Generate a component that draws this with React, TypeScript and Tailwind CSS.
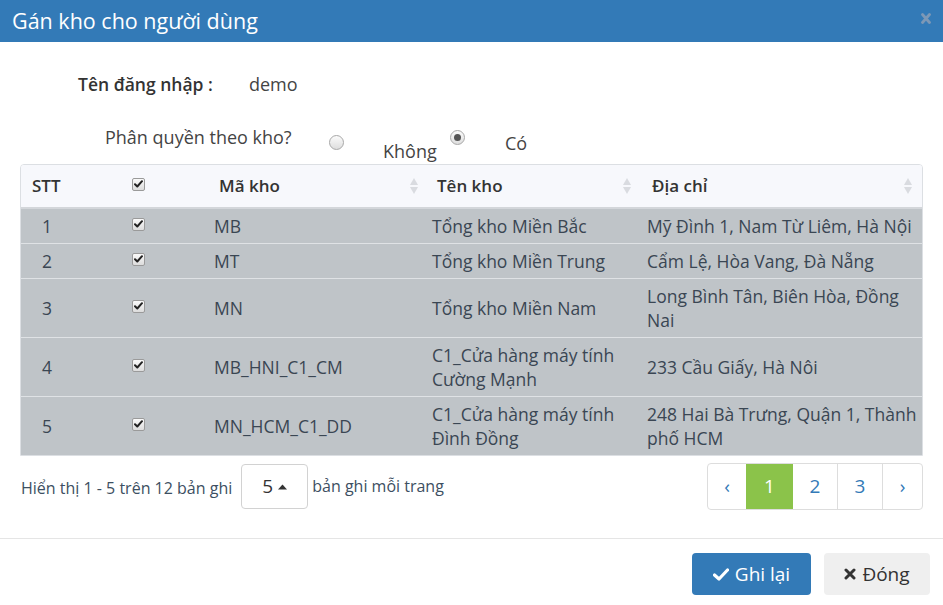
import React from "react";

const font = { fontFamily: '"Open Sans", "Noto Sans", sans-serif' };

function Check() {
  return (
    <span className="inline-flex h-[13px] w-[13px] items-center justify-center rounded-[2px] border border-[#9a9a9a] bg-gradient-to-b from-[#fafafa] to-[#dcdcdc]">
      <svg width="9" height="8" viewBox="0 0 9 8">
        <path d="M1 4.2 L3.3 6.5 L8 1.2" stroke="#222" strokeWidth="2" fill="none" strokeLinecap="round" strokeLinejoin="round" />
      </svg>
    </span>
  );
}

function Radio({ checked }: { checked?: boolean }) {
  return (
    <span className="inline-flex h-[15px] w-[15px] items-center justify-center rounded-full border border-[#a8a8a8] bg-gradient-to-b from-[#fbfbfb] to-[#dedede]">
      {checked && <span className="h-[7px] w-[7px] rounded-full bg-[#555]" />}
    </span>
  );
}

function Sort() {
  return (
    <svg width="10" height="18" viewBox="0 0 10 18" className="shrink-0">
      <path d="M5 1 L9 8 L1 8 Z" fill="#d9dbe0" />
      <path d="M1 10 L9 10 L5 17 Z" fill="#d9dbe0" />
    </svg>
  );
}

const rows: { stt: string; ma: string; ten: string[]; dc: string[] }[] = [
  { stt: "1", ma: "MB", ten: ["Tổng kho Miền Bắc"], dc: ["Mỹ Đình 1, Nam Từ Liêm, Hà Nội"] },
  { stt: "2", ma: "MT", ten: ["Tổng kho Miền Trung"], dc: ["Cẩm Lệ, Hòa Vang, Đà Nẵng"] },
  { stt: "3", ma: "MN", ten: ["Tổng kho Miền Nam"], dc: ["Long Bình Tân, Biên Hòa, Đồng", "Nai"] },
  { stt: "4", ma: "MB_HNI_C1_CM", ten: ["C1_Cửa hàng máy tính", "Cường Mạnh"], dc: ["233 Cầu Giấy, Hà Nôi"] },
  { stt: "5", ma: "MN_HCM_C1_DD", ten: ["C1_Cửa hàng máy tính", "Đình Đồng"], dc: ["248 Hai Bà Trưng, Quận 1, Thành", "phố HCM"] },
];

export default function App() {
  return (
    <div style={font} className="flex h-[605px] w-[943px] flex-col overflow-hidden bg-white text-[#333]">
      {/* header */}
      <div className="flex h-[42px] items-center justify-between bg-[#337ab7] pl-[12px] pr-[12px]">
        <span className="text-[21.5px] leading-none text-white">Gán kho cho người dùng</span>
        <svg width="10" height="11" viewBox="0 0 10 11" className="mt-[-6px]">
          <path d="M1.5 1.5 L8.5 9.5 M8.5 1.5 L1.5 9.5" stroke="#7d98b6" strokeWidth="2.8" strokeLinecap="round" />
        </svg>
      </div>

      {/* body */}
      <div className="flex flex-col px-[20px]">
        <div className="mt-[30px] flex h-[24px] items-center">
          <span className="ml-[58px] w-[171px] text-[17.5px] font-semibold text-[#333]">Tên đăng nhập :</span>
          <span className="text-[18px] text-[#444]">demo</span>
        </div>

        <div className="flex h-[68px] items-start text-[18px] leading-[26px] text-[#444]">
          <span className="ml-[85px] mt-[28px] w-[224px]">Phân quyền theo kho?</span>
          <span className="mt-[39px] flex"><Radio /></span>
          <span className="ml-[39px] mt-[42px] w-[67px]">Không</span>
          <span className="mt-[34px] flex"><Radio checked /></span>
          <span className="ml-[40px] mt-[34px]">Có</span>
        </div>

        {/* table */}
        <div className="overflow-hidden rounded-t-[4px] border border-[#dcdfe3]">
          <table className="w-full table-fixed border-collapse">
            <colgroup>
              <col className="w-[99px]" />
              <col className="w-[80px]" />
              <col className="w-[225px]" />
              <col className="w-[215px]" />
              <col />
            </colgroup>
            <thead>
              <tr className="h-[43px] border-b-2 border-[#d3d6da] bg-[#f7f8fc] text-left text-[17px]">
                <th className="pl-[11px] font-semibold text-[#333]">STT</th>
                <th className="pl-[12px] align-middle">
                  <span className="relative top-[-2px] flex"><Check /></span>
                </th>
                <th className="pl-[19px] pr-[6px] font-semibold text-[#333]">
                  <div className="flex items-center justify-between">
                    <span>Mã kho</span>
                    <Sort />
                  </div>
                </th>
                <th className="pl-[12px] pr-[8px] font-semibold text-[#333]">
                  <div className="flex items-center justify-between">
                    <span>Tên kho</span>
                    <Sort />
                  </div>
                </th>
                <th className="pl-[12px] pr-[9px] font-semibold text-[#333]">
                  <div className="flex items-center justify-between">
                    <span>Địa chỉ</span>
                    <Sort />
                  </div>
                </th>
              </tr>
            </thead>
            <tbody>
              {rows.map((r) => (
                <tr key={r.stt} className="border-b border-[#dfe2e5] bg-[#bfc4c8] text-[17.5px] text-[#3a4653] last:border-b-0">
                  <td className="py-[5px] pl-[21px] leading-[24px]">{r.stt}</td>
                  <td className="py-[5px] pl-[12px] align-middle">
                    <span className="relative top-[-2px] flex"><Check /></span>
                  </td>
                  <td className="py-[5px] pl-[14px] leading-[24px]">{r.ma}</td>
                  <td className="whitespace-nowrap py-[5px] pl-[7px] leading-[24px]">
                    {r.ten.map((t, i) => (
                      <div key={i}>{t}</div>
                    ))}
                  </td>
                  <td className="whitespace-nowrap py-[5px] pl-[7px] leading-[24px]">
                    {r.dc.map((t, i) => (
                      <div key={i}>{t}</div>
                    ))}
                  </td>
                </tr>
              ))}
            </tbody>
          </table>
        </div>

        {/* pagination row */}
        <div className="mt-[7px] flex items-start justify-between">
          <div className="flex items-start text-[16px] text-[#3d4f62]">
            <span className="ml-[1px] mt-[13px]">Hiển thị 1 - 5 trên 12 bản ghi</span>
            <div className="ml-[9px] mt-[1px] flex h-[45px] w-[67px] items-center justify-center gap-[5px] rounded-[4px] border border-[#d2d2d2] text-[19px] text-[#333]">
              <span>5</span>
              <svg width="9" height="6" viewBox="0 0 9 6"><path d="M0 5.5 L4.5 0.5 L9 5.5 Z" fill="#333" /></svg>
            </div>
            <span className="ml-[4px] mt-[11px]">bản ghi mỗi trang</span>
          </div>
          <div className="flex h-[47px] overflow-hidden rounded-[4px] border border-[#ddd] text-[19px] text-[#337ab7]">
            <div className="flex w-[38px] items-center justify-center">‹</div>
            <div className="flex w-[47px] items-center justify-center bg-[#8bc34a] text-white">1</div>
            <div className="flex w-[45px] items-center justify-center border-r border-[#ddd]">2</div>
            <div className="flex w-[45px] items-center justify-center border-r border-[#ddd]">3</div>
            <div className="flex w-[39px] items-center justify-center">›</div>
          </div>
        </div>
      </div>

      {/* footer */}
      <div className="mt-[28px] flex justify-end gap-[13px] border-t border-[#e5e5e5] pr-[13px] pt-[14px]">
        <button className="flex h-[42px] w-[119px] items-center justify-center gap-[6px] rounded-[4px] bg-[#337ab7] text-[19px] text-white">
          <svg width="16" height="13" viewBox="0 0 16 13"><path d="M1.5 7 L6 11 L14.5 2" stroke="#fff" strokeWidth="3.2" fill="none" strokeLinecap="round" strokeLinejoin="round" /></svg>
          Ghi lại
        </button>
        <button className="flex h-[42px] w-[106px] items-center justify-center gap-[6px] rounded-[4px] bg-[#efefef] text-[19px] text-[#333]">
          <svg width="12" height="12" viewBox="0 0 12 12"><path d="M2 2 L10 10 M10 2 L2 10" stroke="#333" strokeWidth="3" strokeLinecap="round" /></svg>
          Đóng
        </button>
      </div>
    </div>
  );
}
